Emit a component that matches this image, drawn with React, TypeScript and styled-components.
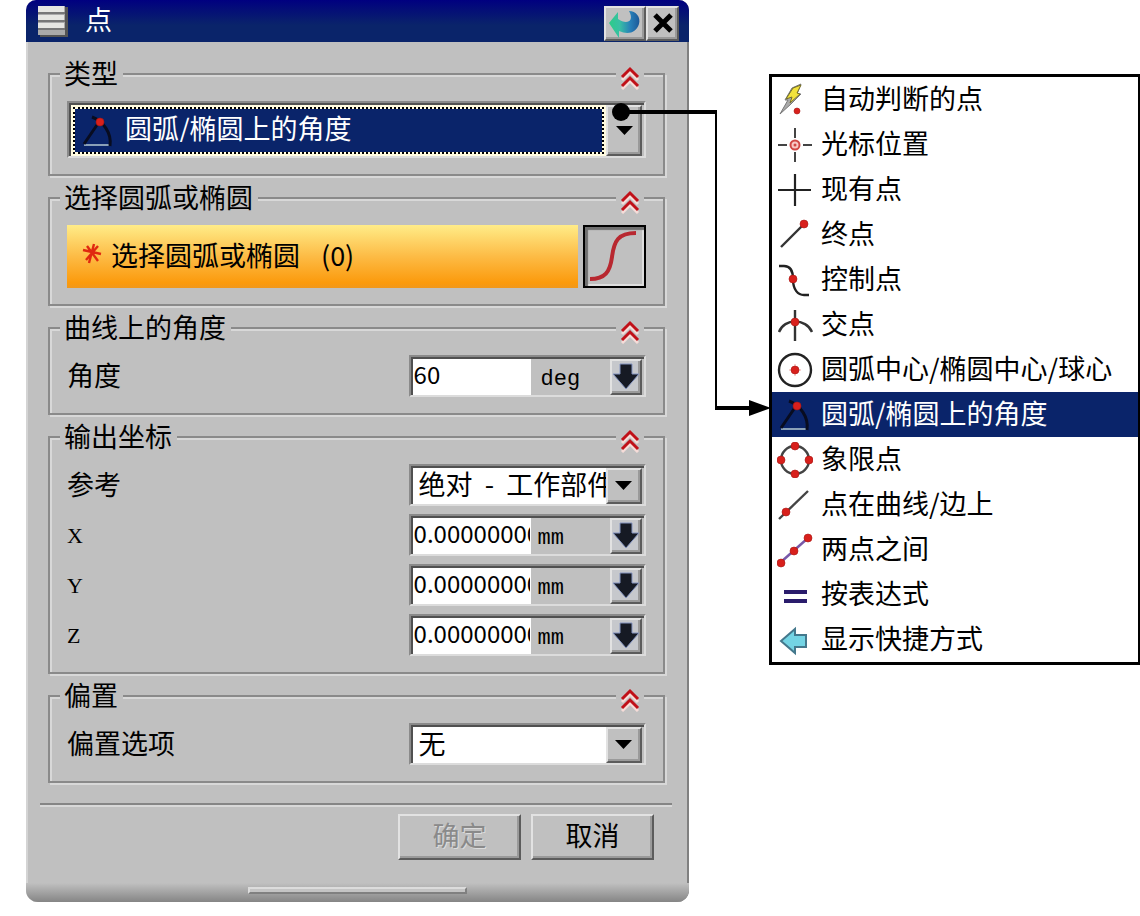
import React from 'react';
import styled, { createGlobalStyle, css } from 'styled-components';

const face = '#c0c0c0';
const navy = '#0a246a';
const cjk = '"Noto Sans CJK SC", sans-serif';

const GlobalStyle = createGlobalStyle`
  *, *::before, *::after { box-sizing: border-box; }
  body {
    margin: 0;
    background: #fff;
    color: #000;
    font-family: ${cjk};
    font-size: 27px;
    line-height: 28px;
  }
  button, input, select { font: inherit; color: inherit; border-radius: 0; }
`;

const raised = css`
  border: 2px solid;
  border-color: #e2e2e2 #5c5c5c #5c5c5c #e2e2e2;
  box-shadow: inset -2px -2px 0 #9a9a9a;
`;

const Page = styled.main`
  display: grid;
  grid-template-columns: minmax(0, 663fr) 80px minmax(0, 371fr);
  align-items: start;
  padding-left: 26px;
`;

const Dialog = styled.form`
  background: ${face};
  border-radius: 10px 10px 12px 12px;
  overflow: hidden;
  box-shadow: inset 2px 0 0 #d4d4d4, inset -2px 0 0 #808080;
`;

const TitleBar = styled.header`
  display: flex;
  align-items: center;
  height: 42px;
  padding: 0 10px 0 11px;
  color: #fff;
  background: linear-gradient(#000080, ${navy} 60%);
`;

const Title = styled.h1`
  flex: 1;
  margin: 0 0 0 17px;
  padding-bottom: 4px;
  font-size: 27px;
  font-weight: 400;
`;

const TitleButton = styled.button<{ $wide?: boolean }>`
  ${raised}
  display: flex;
  align-items: center;
  justify-content: center;
  width: ${(p) => (p.$wide ? 42 : 33)}px;
  height: 35px;
  margin-top: 5px;
  padding: 0;
  background: ${face};
`;

const Groups = styled.div`
  display: flex;
  flex-direction: column;
  gap: 8px;
  padding: 18px 24px 20px 22px;
`;

const GroupBox = styled.fieldset`
  position: relative;
  min-width: 0;
  margin: 0;
  padding: 13px 17px 16px;
  border: 2px solid #8a8a8a;
  box-shadow: inset 2px 2px 0 #d8d8d8, 2px 2px 0 #d8d8d8;
`;

const Legend = styled.legend`
  position: relative;
  margin-left: -7px;
  padding: 0 5px 2px 4px;
  line-height: 26px;
  background: ${face};
`;

const Collapse = styled.button`
  position: absolute;
  top: -24px;
  right: 19px;
  display: flex;
  align-items: center;
  justify-content: center;
  width: 28px;
  height: 28px;
  padding: 0;
  border: 0;
  background: ${face};
`;

const Rows = styled.div`
  display: flex;
  flex-direction: column;
  gap: 8px;
`;

const Row = styled.div`
  display: grid;
  grid-template-columns: 59% 41%;
  align-items: center;
`;

const Label = styled.label<{ $latin?: boolean }>`
  ${(p) =>
    p.$latin
      ? 'padding-top: 2px; font-family: "Liberation Serif", serif; font-size: 22px;'
      : 'padding-bottom: 2px;'}
`;

const Frame = styled.div<{ $tall?: boolean }>`
  display: flex;
  height: ${(p) => (p.$tall ? 57 : 42)}px;
  border: 2px solid;
  border-color: #8a8a8a #dcdcdc #dcdcdc #8a8a8a;
  box-shadow: inset 2px 2px 0 #505050;
  padding: 2px 2px 0 2px;
`;

const Select = styled.select`
  flex: 1;
  min-width: 0;
  padding: 0 0 4px 6px;
  border: 0;
  outline: 0;
  appearance: none;
  text-overflow: clip;
  background: #fff;
`;

const TypeSelect = styled(Select)`
  padding-bottom: 6px;
  color: #fff;
  background: ${navy};
`;

const FocusArea = styled.div`
  flex: 1;
  min-width: 0;
  display: flex;
  padding: 2px;
  background: #fffbe0;
`;

const FocusInner = styled.div`
  flex: 1;
  min-width: 0;
  display: flex;
  align-items: center;
  gap: 3px;
  padding-left: 5px;
  border: 2px dotted #000;
  background: ${navy};
  background-clip: padding-box;
`;

const DropArrow = styled.span`
  ${raised}
  flex: 0 0 36px;
  display: flex;
  align-items: center;
  justify-content: center;
  background: ${face};
`;

const ValueInput = styled.input`
  flex: 0 0 118px;
  min-width: 0;
  padding: 0 1px 6px;
  border: 0;
  outline: 0;
  font-size: 24px;
  background: #fff;
`;

const Unit = styled.span<{ $inset: number }>`
  flex: 1;
  align-self: center;
  padding: 6px 0 0 ${(p) => p.$inset}px;
  font-family: "Liberation Mono", monospace;
  font-size: 22px;
`;

const SpinButton = styled.button`
  ${raised}
  flex: 0 0 32px;
  display: flex;
  align-items: center;
  justify-content: center;
  padding: 0;
  background: #c6c8cc;
`;

const PickRow = styled.div`
  display: flex;
  gap: 5px;
`;

const PickPrompt = styled.div`
  flex: 1;
  display: flex;
  align-items: center;
  height: 63px;
  padding: 0 0 4px 15px;
  gap: 9px;
  background: linear-gradient(#ffec88, #fdbb45 50%, #fb9a0c 92%, #f0981c);
`;

const Count = styled.span`
  margin-left: 12px;
`;

const CurveButton = styled.button`
  flex: 0 0 63px;
  height: 63px;
  padding: 0;
  border: 2px solid #000;
  background: ${face};
  box-shadow: inset 3px 3px 1px #707070, inset -2px -2px 0 #dedede;
`;

const Divider = styled.hr`
  height: 4px;
  margin: 0 17px 0 14px;
  border: 0;
  border-top: 2px solid #858585;
  border-bottom: 2px solid #d8d8d8;
`;

const Actions = styled.div`
  display: flex;
  justify-content: flex-end;
  gap: 10px;
  padding: 7px 35px 23px 0;
`;

const ActionButton = styled.button`
  ${raised}
  width: 123px;
  height: 46px;
  padding: 0 0 4px;
  background: ${face};
  &:disabled { color: #8a8a8a; text-shadow: 1px 1px 0 #dcdcdc; }
`;

const Grip = styled.div`
  display: flex;
  justify-content: center;
  height: 19px;
  padding-top: 4px;
  background: linear-gradient(${face}, #858585);
  &::after {
    content: "";
    width: 33%;
    height: 7px;
    border: 2px solid;
    border-color: #dcdcdc #808080 #808080 #dcdcdc;
    background: #c4c4c4;
  }
`;

const Connector = styled.div`
  position: relative;
  svg { position: absolute; top: 100px; left: -78px; }
`;

const Menu = styled.ul`
  margin: 74px 0 0;
  padding: 0;
  list-style: none;
  border: 3px solid #000;
  border-right-width: 2px;
`;

const MenuItem = styled.button<{ $selected?: boolean }>`
  display: flex;
  align-items: center;
  gap: 8px;
  width: 100%;
  height: 45px;
  padding: 0 0 0 5px;
  border: 0;
  text-align: left;
  white-space: nowrap;
  color: ${(p) => (p.$selected ? '#fff' : '#000')};
  background: ${(p) => (p.$selected ? navy : '#fff')};
  svg { flex: none; }
  span { padding-bottom: 4px; }
`;

const Dot = ({ x, y, r = 4 }: { x: number; y: number; r?: number }) => (
  <circle cx={x} cy={y} r={r} fill="#d8201c" stroke="#a81814" strokeWidth="0.6" />
);

const art: Record<string, React.ReactNode> = {
  infer: (
    <>
      <path d="M15 6 24 2 20 12 24 12 14 22 3 32 11 18 8 18Z" fill="#aaa" stroke="#777" />
      <path d="M16 6 24 3 20 11 23 12 13 21 15 15 9 17Z" fill="#f2e23c" stroke="#77702a" />
      <Dot x={20} y={29} r={3} />
    </>
  ),
  cursor: (
    <>
      <path d="M18 1V11M18 25V35M1 18H10M26 18H35" stroke="#444" strokeWidth="2" />
      <circle cx="18" cy="18" r="4.5" fill="#f8c8c4" stroke="#d04844" strokeWidth="2" />
      <circle cx="18" cy="18" r="1.5" fill="#d04844" />
    </>
  ),
  existing: <path d="M18 2V34M1 18H34" stroke="#222" strokeWidth="2.2" />,
  end: (
    <>
      <path d="M4 30 26 8" stroke="#333" strokeWidth="2.4" />
      <Dot x={27} y={7} />
    </>
  ),
  control: (
    <>
      <path d="M2 4H7C14 4 16 9 16 17C16 28 21 33 27 33H32" stroke="#222" strokeWidth="2.4" />
      <Dot x={16} y={17} />
    </>
  ),
  cross: (
    <>
      <path d="M18 3V34M2 25C7 11 29 11 35 25" stroke="#333" strokeWidth="2.4" />
      <Dot x={18} y={15} />
    </>
  ),
  center: (
    <>
      <circle cx="18" cy="18" r="16" stroke="#222" strokeWidth="2.4" />
      <path d="M12 18H24M18 12V24" stroke="#f0a8a4" />
      <Dot x={18} y={18} />
    </>
  ),
  angle: (
    <>
      <path d="M4 32H29" stroke="#8aa0b8" strokeWidth="2" />
      <path d="M4 31 19 9M12 4C23 8 32 20 30 33" stroke="#080c20" strokeWidth="3" />
      <Dot x={20} y={9} />
    </>
  ),
  quadrant: (
    <>
      <circle cx="18" cy="18" r="14" stroke="#444" strokeWidth="2.4" />
      <Dot x={18} y={4} />
      <Dot x={32} y={18} />
      <Dot x={18} y={32} />
      <Dot x={4} y={18} />
    </>
  ),
  onCurve: (
    <>
      <path d="M2 32 31 4" stroke="#444" strokeWidth="2.4" />
      <Dot x={9} y={25} />
    </>
  ),
  between: (
    <>
      <path d="M4 30 31 6" stroke="#7858a8" strokeWidth="2.4" />
      <Dot x={4} y={31} />
      <Dot x={17} y={19} />
      <Dot x={31} y={6} />
    </>
  ),
  expression: <path d="M7 15H30M7 24H30" stroke="#2a1c6c" strokeWidth="4" />,
  shortcut: <path d="M4 19 18 7V13H29V25H18V31Z" fill="#74d4e4" stroke="#44788c" strokeWidth="2" />,
};

const types = [
  ['infer', '自动判断的点'],
  ['cursor', '光标位置'],
  ['existing', '现有点'],
  ['end', '终点'],
  ['control', '控制点'],
  ['cross', '交点'],
  ['center', '圆弧中心/椭圆中心/球心'],
  ['angle', '圆弧/椭圆上的角度'],
  ['quadrant', '象限点'],
  ['onCurve', '点在曲线/边上'],
  ['between', '两点之间'],
  ['expression', '按表达式'],
  ['shortcut', '显示快捷方式'],
];

const Icon = ({ name }: { name: string }) => (
  <svg width="36" height="36" viewBox="0 0 36 36" fill="none" aria-hidden="true">
    {art[name]}
  </svg>
);

const Drop = () => (
  <DropArrow aria-hidden="true">
    <svg width="17" height="10" viewBox="0 0 17 10">
      <path d="M0 0H17L8.5 9Z" />
    </svg>
  </DropArrow>
);

const Group = ({ title, children }: { title: string; children: React.ReactNode }) => (
  <GroupBox>
    <Legend>{title}</Legend>
    {children}
    <Collapse type="button" aria-label={`收起${title}`}>
      <svg width="20" height="24" viewBox="0 0 20 24" fill="none">
        <path d="M2 14 10 6 18 14M2 23 10 15 18 23" stroke="#f6dcd8" strokeWidth="3" />
        <path d="M2 11 10 3 18 11M2 20 10 12 18 20" stroke="#c01018" strokeWidth="3" />
      </svg>
    </Collapse>
  </GroupBox>
);

const ValueRow = ({ id, label, value, unit, latin }: { id: string; label: string; value: string; unit: string; latin?: boolean }) => (
  <Row>
    <Label htmlFor={id} $latin={latin}>{label}</Label>
    <Frame>
      <ValueInput id={id} defaultValue={value} />
      <Unit $inset={unit === 'deg' ? 10 : 7}>{unit}</Unit>
      <SpinButton type="button" aria-label={`${label} 选项`}>
        <svg width="28" height="30" viewBox="0 0 28 30">
          <path d="M8 2H20V12H27L14 27 1 12H8Z" fill="#161a24" stroke="#8494c0" strokeWidth="1" />
        </svg>
      </SpinButton>
    </Frame>
  </Row>
);

const SelectRow = ({ id, label, value }: { id: string; label: string; value: string }) => (
  <Row>
    <Label htmlFor={id}>{label}</Label>
    <Frame>
      <Select id={id}>
        <option>{value}</option>
      </Select>
      <Drop />
    </Frame>
  </Row>
);

export default function App() {
  return (
    <>
      <GlobalStyle />
      <Page>
        <Dialog onSubmit={(e) => e.preventDefault()}>
          <TitleBar>
            <svg width="31" height="32" viewBox="0 0 31 32" aria-hidden="true">
              <path d="M3 2H31V32H3Z" fill="#555" />
              <path d="M1 1H28V30H1Z" fill="#aaa" />
              <path d="M1 1H27V7H1ZM1 10H27V15H1ZM1 18H27V23H1Z" fill="#e6e6e2" />
              <path d="M1 7H28V9H1ZM1 15H28V17H1ZM1 23H28V25H1Z" fill="#777" />
            </svg>
            <Title>点</Title>
            <TitleButton type="button" aria-label="重置" $wide>
              <svg width="34" height="30" viewBox="0 0 34 30">
                <defs>
                  <linearGradient id="reset">
                    <stop offset="0" stopColor="#2ccc88" />
                    <stop offset="0.35" stopColor="#38c0a4" />
                    <stop offset="0.7" stopColor="#2880b8" />
                    <stop offset="1" stopColor="#1c5898" />
                  </linearGradient>
                </defs>
                <path d="M1 14 10 3V10C18 16 27 13 21 2C28 2 33 8 31 15C28 24 20 26 11 22V29Z" fill="url(#reset)" />
              </svg>
            </TitleButton>
            <TitleButton type="button" aria-label="关闭">
              <svg width="22" height="22" viewBox="0 0 22 22">
                <path d="M3 2 19 18M19 2 3 18" stroke="#000" strokeWidth="5" />
              </svg>
            </TitleButton>
          </TitleBar>

          <Groups>
            <Group title="类型">
              <Frame $tall>
                <FocusArea>
                  <FocusInner>
                    <Icon name="angle" />
                    <TypeSelect aria-label="类型" defaultValue="圆弧/椭圆上的角度">
                      {types.map(([name, text]) => (
                        <option key={name}>{text}</option>
                      ))}
                    </TypeSelect>
                  </FocusInner>
                </FocusArea>
                <Drop />
              </Frame>
            </Group>

            <Group title="选择圆弧或椭圆">
              <PickRow>
                <PickPrompt>
                  <svg width="20" height="24" viewBox="0 0 20 24" aria-hidden="true">
                    <path d="M12 1 7 20M1 7 19 11M4 17 16 3M5 3 16 18" stroke="#e02810" strokeWidth="2.4" />
                  </svg>
                  <span>选择圆弧或椭圆</span>
                  <Count>(0)</Count>
                </PickPrompt>
                <CurveButton type="button" aria-label="选择曲线">
                  <svg width="59" height="59" viewBox="0 0 59 59" fill="none">
                    <path d="M5 52C20 52 25 45 27 30C29 14 33 6 51 6" stroke="#b82830" strokeWidth="4" />
                  </svg>
                </CurveButton>
              </PickRow>
            </Group>

            <Group title="曲线上的角度">
              <ValueRow id="angle" label="角度" value="60" unit="deg" />
            </Group>

            <Group title="输出坐标">
              <Rows>
                <SelectRow id="reference" label="参考" value={'绝对\u00a0\u00a0-\u00a0\u00a0工作部件'} />
                <ValueRow id="x" label="X" value="0.000000000" unit="mm" latin />
                <ValueRow id="y" label="Y" value="0.000000000" unit="mm" latin />
                <ValueRow id="z" label="Z" value="0.000000000" unit="mm" latin />
              </Rows>
            </Group>

            <Group title="偏置">
              <SelectRow id="offset" label="偏置选项" value="无" />
            </Group>
          </Groups>

          <Divider />
          <Actions>
            <ActionButton type="submit" disabled>确定</ActionButton>
            <ActionButton type="button">取消</ActionButton>
          </Actions>
          <Grip />
        </Dialog>

        <Connector>
          <svg width="160" height="320" viewBox="0 0 160 320" fill="none" aria-hidden="true">
            <circle cx="10" cy="12" r="9" fill="#000" />
            <path d="M10 12H106" stroke="#000" strokeWidth="4" />
            <path d="M105 10V309" stroke="#000" strokeWidth="2" />
            <path d="M104 308H142" stroke="#000" strokeWidth="4" />
            <path d="M138 300 160 308 138 316Z" fill="#000" />
          </svg>
        </Connector>

        <Menu>
          {types.map(([name, text]) => (
            <li key={name}>
              <MenuItem type="button" $selected={name === 'angle'}>
                <Icon name={name} />
                <span>{text}</span>
              </MenuItem>
            </li>
          ))}
        </Menu>
      </Page>
    </>
  );
}
